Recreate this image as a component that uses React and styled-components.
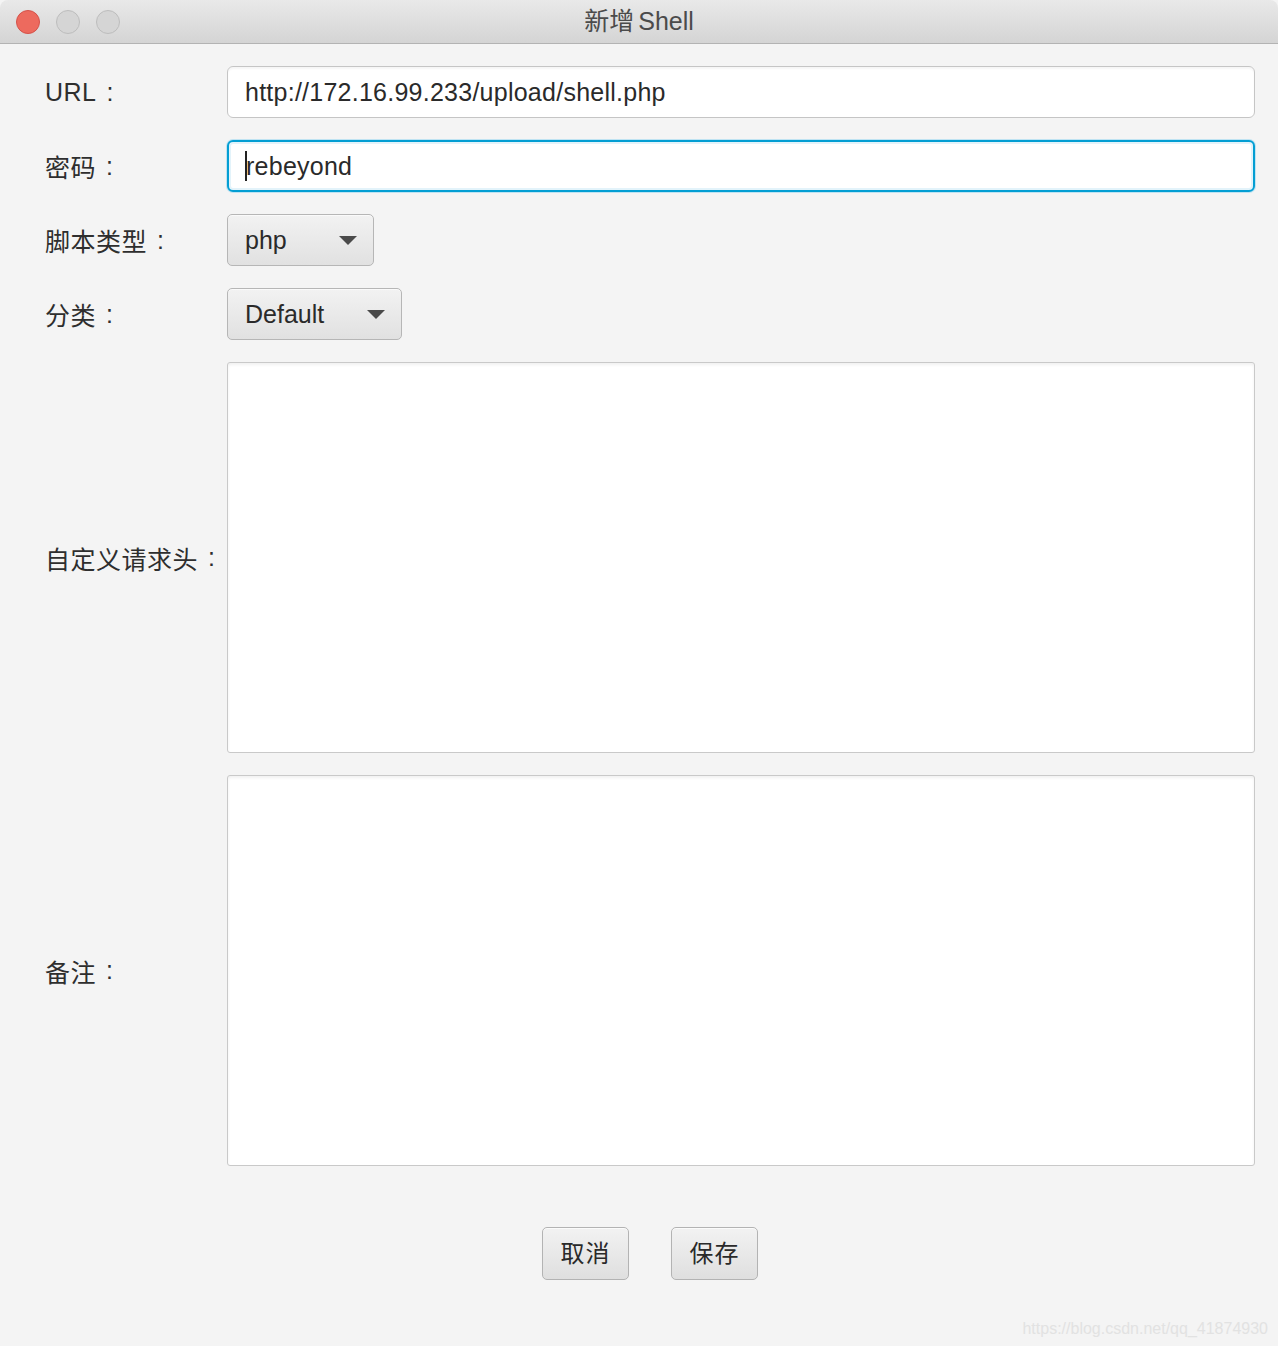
import styled, { createGlobalStyle } from 'styled-components'

const GlobalStyle = createGlobalStyle`
  html, body {
    margin: 0;
    padding: 0;
    background: #f4f4f4;
  }
  * { box-sizing: border-box; }
`

const Window = styled.div`
  width: 1278px;
  height: 1346px;
  background: #f4f4f4;
  font-family: "Liberation Sans", "Noto Sans CJK SC", sans-serif;
  color: #2b2b2b;
  display: flex;
  flex-direction: column;
  position: relative;
  overflow: hidden;
  border-top-left-radius: 8px;
  border-top-right-radius: 8px;
`

const TitleBar = styled.div`
  height: 44px;
  flex: none;
  background: linear-gradient(#e9e9e9, #d4d4d4);
  border-bottom: 1px solid #b3b3b3;
  display: flex;
  align-items: center;
  position: relative;
  padding-left: 16px;
  gap: 16px;
`

const Light = styled.span`
  width: 24px;
  height: 24px;
  border-radius: 50%;
  background: ${p => p.red ? '#ed6a5e' : '#d5d5d5'};
  border: 1px solid ${p => p.red ? '#d5524a' : '#bdbdbd'};
`

const Title = styled.div`
  position: absolute;
  left: 0;
  right: 0;
  top: 3px;
  display: flex;
  align-items: baseline;
  justify-content: center;
  gap: 4px;
  font-family: "Liberation Sans", "Noto Sans CJK SC", sans-serif;
  font-size: 25px;
  line-height: 36px;
  color: #4b4b4b;
  pointer-events: none;
`

const Form = styled.div`
  display: grid;
  grid-template-columns: 182px 1fr;
  row-gap: 22px;
  padding: 22px 23px 0 45px;
`

const Label = styled.div`
  display: flex;
  align-items: center;
  font-family: "Liberation Sans", "Noto Sans CJK SC", sans-serif;
  font-size: 25px;
  color: #2e2e2e;
  white-space: nowrap;
  letter-spacing: 0.5px;
`

const Colon = styled.span`
  margin-left: 10px;
  font-family: "Liberation Sans", sans-serif;
`

const TextField = styled.div`
  height: 52px;
  background: #fff;
  border-radius: 6px;
  border: ${p => p.focused ? '2px solid #039ed3' : '1px solid #c5c5c5'};
  box-shadow: ${p => p.focused ? '0 0 0 1px #bfe3f2, inset 0 0 0 2px #e3f3fa' : 'inset 0 2px 2px rgba(0,0,0,0.04)'};
  display: flex;
  align-items: center;
  padding-left: ${p => p.focused ? '16px' : '17px'};
  font-size: 25px;
  letter-spacing: 0.25px;
  color: #2a2a2a;
`

const Caret = styled.span`
  width: 2px;
  height: 30px;
  background: #222;
  margin-right: -1px;
`

const Select = styled.div`
  width: ${p => p.w}px;
  height: 52px;
  border: 1px solid #b6b6b6;
  border-radius: 5px;
  background: linear-gradient(#f2f2f2, #e1e1e1);
  box-shadow: inset 0 1px 0 #fafafa;
  display: flex;
  align-items: center;
  justify-content: space-between;
  padding: 0 16px 0 17px;
  font-size: 25px;
  color: #2a2a2a;
`

const Arrow = styled.span`
  width: 0;
  height: 0;
  border-left: 9px solid transparent;
  border-right: 9px solid transparent;
  border-top: 9px solid #4a4a4a;
`

const TextArea = styled.div`
  height: 391px;
  background: #fff;
  border: 1px solid #c9c9c9;
  border-radius: 3px;
  box-shadow: inset 0 2px 3px rgba(0,0,0,0.06);
`

const Buttons = styled.div`
  display: flex;
  justify-content: center;
  gap: 42px;
  margin-top: 61px;
  padding-left: 22px;
`

const Button = styled.div`
  width: 87px;
  height: 53px;
  padding-bottom: 4px;
  border: 1px solid #b3b3b3;
  border-radius: 5px;
  background: linear-gradient(#f2f2f2, #dfdfdf);
  box-shadow: inset 0 1px 0 #fbfbfb;
  display: flex;
  align-items: center;
  justify-content: center;
  font-family: "Noto Sans CJK SC", sans-serif;
  font-size: 24px;
  color: #2a2a2a;
  letter-spacing: 1px;
`

const Watermark = styled.div`
  position: absolute;
  right: 10px;
  bottom: 8px;
  font-family: "Liberation Sans", sans-serif;
  font-size: 16px;
  color: #e2e2e2;
`

export default function App() {
  return (
    <>
      <GlobalStyle />
      <Window>
        <TitleBar>
          <Light red />
          <Light />
          <Light />
          <Title><span>新增</span><span>Shell</span></Title>
        </TitleBar>
        <Form>
          <Label>URL<Colon>:</Colon></Label>
          <TextField>http://172.16.99.233/upload/shell.php</TextField>

          <Label>密码<Colon>:</Colon></Label>
          <TextField focused><Caret />rebeyond</TextField>

          <Label>脚本类型<Colon>:</Colon></Label>
          <div><Select w={147}><span>php</span><Arrow /></Select></div>

          <Label>分类<Colon>:</Colon></Label>
          <div><Select w={175}><span>Default</span><Arrow /></Select></div>

          <Label>自定义请求头<Colon>:</Colon></Label>
          <TextArea />

          <Label>备注<Colon>:</Colon></Label>
          <TextArea />
        </Form>
        <Buttons>
          <Button>取消</Button>
          <Button>保存</Button>
        </Buttons>
        <Watermark>https://blog.csdn.net/qq_41874930</Watermark>
      </Window>
    </>
  )
}
